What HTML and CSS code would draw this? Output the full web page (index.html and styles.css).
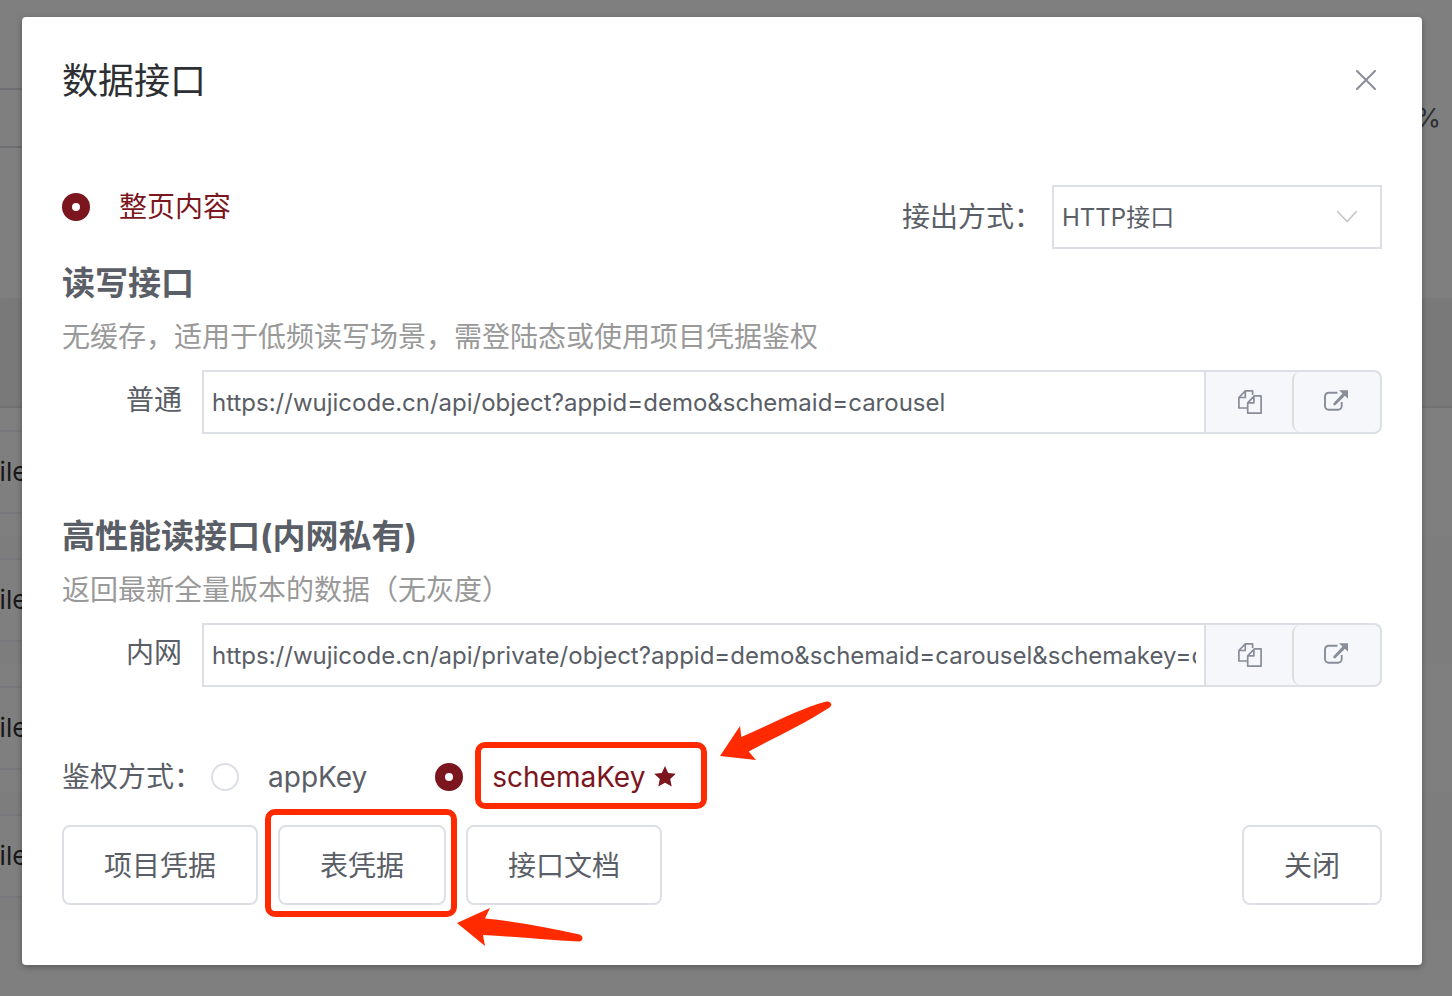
FILE: index.html
```html
<!DOCTYPE html>
<html lang="zh-CN">
<head>
<meta charset="utf-8">
<meta name="viewport" content="width=device-width, initial-scale=1">
<title>数据接口</title>
<link rel="stylesheet" href="styles.css">
</head>
<body>
<svg class="sprite" aria-hidden="true">
  <symbol id="icon-copy" viewBox="0 0 24 24">
    <path d="M9 18H.9V7.500L7.300.9H14.600V5M7.300 1v6.500H1M9.700 12.800l6.700-6.900h6.700v17.200H9.700zM9.700 12.800h6.200V6" fill="none" stroke="currentColor" stroke-width="1.700" stroke-linejoin="round"/>
  </symbol>
  <symbol id="icon-open" viewBox="0 0 24 24">
    <path d="M13.500 2.700H4.700A3.700 3.700 0 0 0 1 6.400V16a3.700 3.700 0 0 0 3.700 3.700H14A3.700 3.700 0 0 0 17.700 16v-4" fill="none" stroke="currentColor" stroke-width="1.900"/>
    <path d="M15 .2h9v8.600l-3-3-9.400 9.100a1.300 1.300 0 0 1-1.900-1.900L18.500 3.500z" fill="currentColor"/>
  </symbol>
</svg>

<div class="page" aria-hidden="true">
  <div class="page-top">
    <div class="page-box"></div>
    <span class="page-rate">%</span>
  </div>
  <div class="page-head"></div>
  <div class="page-row"><div class="page-field">file</div></div>
  <div class="page-row page-row-alt"><div class="page-field">file</div></div>
  <div class="page-row"><div class="page-field">file</div></div>
  <div class="page-row page-row-alt"><div class="page-field">file</div></div>
</div>

<div class="overlay">
  <main class="dialog" role="dialog" aria-labelledby="dialog-title">
    <header class="dialog-header">
      <h1 class="dialog-title" id="dialog-title">数据接口</h1>
      <button class="close" type="button" aria-label="关闭">
        <svg class="close-icon" viewBox="0 0 20 20"><path d="M1 1l18 18M19 1L1 19" fill="none" stroke="currentColor" stroke-width="2" stroke-linecap="round"/></svg>
      </button>
    </header>

    <div class="toolbar">
      <label class="choice choice-top"><input class="radio" type="radio" name="scope" checked><span class="choice-text">整页内容</span></label>
      <div class="method">
        <label for="method">接出方式：</label>
        <div class="select-wrap">
          <select class="select" id="method"><option>HTTP接口</option></select>
          <svg class="chevron" viewBox="0 0 20 12"><path d="M.8.8L10 10.500 19.200.8" fill="none" stroke="currentColor" stroke-width="1.600" stroke-linecap="round" stroke-linejoin="round"/></svg>
        </div>
      </div>
    </div>

    <section class="api">
      <h2 class="api-title">读写接口</h2>
      <p class="api-desc">无缓存，适用于低频读写场景，需登陆态或使用项目凭据鉴权</p>
      <div class="api-row">
        <label class="api-label" for="url-normal">普通</label>
        <input class="url" id="url-normal" type="text" value="https://wujicode.cn/api/object?appid=demo&amp;schemaid=carousel">
        <div class="append">
          <button class="tool" type="button" aria-label="复制"><svg class="tool-icon"><use href="#icon-copy"/></svg></button>
          <button class="tool tool-last" type="button" aria-label="打开"><svg class="tool-icon"><use href="#icon-open"/></svg></button>
        </div>
      </div>
    </section>

    <section class="api">
      <h2 class="api-title">高性能读接口(内网私有)</h2>
      <p class="api-desc">返回最新全量版本的数据（无灰度）</p>
      <div class="api-row">
        <label class="api-label" for="url-private">内网</label>
        <input class="url" id="url-private" type="text" value="https://wujicode.cn/api/private/object?appid=demo&amp;schemaid=carousel&amp;schemakey=demo">
        <div class="append">
          <button class="tool" type="button" aria-label="复制"><svg class="tool-icon"><use href="#icon-copy"/></svg></button>
          <button class="tool tool-last" type="button" aria-label="打开"><svg class="tool-icon"><use href="#icon-open"/></svg></button>
        </div>
      </div>
    </section>

    <div class="auth" role="radiogroup" aria-labelledby="auth-label">
      <span class="auth-label" id="auth-label">鉴权方式：</span>
      <label class="choice choice-key"><input class="radio" type="radio" name="auth"><span class="choice-text">appKey</span></label>
      <label class="choice"><input class="radio" type="radio" name="auth" checked><span class="choice-text marked">schemaKey<svg class="star" viewBox="0 0 22 21"><path d="M11 0l3.200 7 7.600.8-5.600 5.200 1.500 7.500L11 16.800l-6.700 3.700L5.800 13 .2 7.800 7.800 7z" fill="currentColor"/></svg>
        <span class="mark mark-key"></span>
        <svg class="arrow arrow-key" viewBox="0 0 112 60"><path d="M0 55L20 25L21.300 36C50 24 78 8 106.500 .5C111 0 113 4 109.500 6.500C84 23 56 36 28.700 50.500L36 59z" fill="currentColor"/></svg>
      </span></label>
    </div>

    <footer class="footer">
      <button class="btn" type="button">项目凭据</button>
      <div class="marked">
        <button class="btn" type="button">表凭据</button>
        <span class="mark mark-table"></span>
        <svg class="arrow arrow-table" viewBox="0 0 126 38"><path d="M0 15L33 0L28 10.500C60 13.500 92 20 122.500 26.500C127 28 126 33.500 122 33.500C90 32 58 28.500 26 27L28 38z" fill="currentColor"/></svg>
      </div>
      <button class="btn" type="button">接口文档</button>
      <button class="btn btn-end" type="button">关闭</button>
    </footer>
  </main>
</div>
</body>
</html>
```
FILE: styles.css
```css
* { box-sizing: border-box; }

body {
  margin: 0;
  min-height: 100vh;
  background: #fff;
  color: #5a5e66;
  font-family: Inter, "Noto Sans CJK SC", sans-serif;
  font-size: 28px;
}

button, input, select { font-family: inherit; color: inherit; margin: 0; }
h1, h2, p { margin: 0; }
.sprite { display: none; }

/* Page behind the dialog */
.page { position: absolute; inset: 0; overflow: hidden; color: #303133; font-size: 26px; }
.page-top { display: flex; justify-content: space-between; height: 298px; padding: 88px 11px 0 0; }
.page-box { width: 50%; height: 60px; border: 2px solid #dcdfe6; border-left: 0; }
.page-rate { color: #5a5e66; line-height: 60px; }
.page-head { height: 110px; background: #f2f2f2; border-bottom: 2px solid #e4e4e4; }
.page-row { height: 128px; padding: 22px 0; background: #fff; }
.page-row-alt { background: #fafafa; }
.page-field { width: 240px; height: 84px; margin-left: -24px; padding-left: 12px; border: 2px solid #ebeef5; background: #fff; line-height: 80px; }

.overlay { position: relative; min-height: 100vh; padding: 17px 30px 31px 22px; background: rgba(0, 0, 0, .5); }

.dialog {
  padding: 40px 40px 60px;
  border-radius: 4px;
  background: #fff;
  box-shadow: 0 2px 6px rgba(0, 0, 0, .3);
}

.dialog-header { display: flex; align-items: flex-start; justify-content: space-between; height: 48px; margin-bottom: 80px; }
.dialog-title { color: #2d2f33; font-size: 36px; font-weight: 400; line-height: 48px; }
.close { display: flex; padding: 13px 6px; border: 0; background: none; color: #878d99; }
.close-icon { width: 20px; height: 20px; }

.toolbar { display: flex; align-items: flex-start; justify-content: space-between; margin-bottom: 12px; }
.method { display: flex; align-items: center; gap: 10px; line-height: 62px; }
.select-wrap { position: relative; width: 330px; height: 64px; }
.select {
  display: block;
  width: 100%;
  height: 64px;
  padding: 0 60px 0 8px;
  border: 2px solid #dcdfe6;
  border-radius: 0;
  background: #fff;
  font-size: 24px;
  appearance: none;
}
.chevron { position: absolute; top: 26px; right: 25px; width: 20px; height: 12px; color: #c4c4c4; pointer-events: none; }

.choice { display: flex; align-items: center; gap: 29px; line-height: 44px; }
.radio {
  width: 28px;
  height: 28px;
  border: 2px solid #dcdfe6;
  border-radius: 50%;
  background: #fff;
  appearance: none;
}
.radio:checked { border: 10px solid #7b161e; }
.radio:checked + .choice-text { color: #7b161e; }

.api + .api { margin-top: 80px; }
.api-title { margin-bottom: 12px; font-size: 33px; font-weight: 700; line-height: 44px; }
.api-desc { margin-bottom: 13px; color: #999; line-height: 40px; }
.api-row { display: flex; height: 64px; }
.api-label { width: 140px; padding-right: 20px; line-height: 60px; text-align: right; }
.url {
  flex: 1;
  min-width: 0;
  padding: 0 8px;
  border: 2px solid #dcdfe6;
  border-radius: 0;
  background: #fff;
  font-size: 24px;
}
.append {
  display: flex;
  width: 176px;
  border: 2px solid #dcdfe6;
  border-left: 0;
  border-radius: 0 8px 8px 0;
  background: #f5f7fa;
}
.tool { display: flex; flex: 1; align-items: center; justify-content: center; padding: 0 0 0 2px; border: 0; background: none; color: #878d99; }
.tool-last { padding: 0 2px 0 0; border-left: 2px solid #dcdedc; border-radius: 8px; }
.tool-icon { width: 24px; height: 24px; }

.auth { display: flex; align-items: center; height: 52px; margin: 64px 0 22px; }
.auth-label { margin-right: 9px; line-height: 44px; }
.choice-key { margin-right: 68px; }
.star { width: 22px; height: 21px; margin-left: 9px; }

.footer { display: flex; gap: 20px; }
.btn { display: block; height: 80px; padding: 0 40px 2px; border: 2px solid #dcdfe6; border-radius: 8px; background: #fff; font-size: 28px; }
.btn-end { margin-left: auto; }

/* Highlight frames and arrows lying over the controls */
.marked { position: relative; }
.mark { position: absolute; border: 6px solid #ff2a00; border-radius: 10px; pointer-events: none; }
.mark-key { inset: -13px -31px -10px -17px; }
.mark-table { inset: -16px -11px -12px -13px; }
.arrow { position: absolute; color: #ff2a00; pointer-events: none; }
.arrow-key { top: -54px; left: 228px; width: 112px; height: 60px; }
.arrow-table { top: 83px; left: 179px; width: 126px; height: 38px; }
```
